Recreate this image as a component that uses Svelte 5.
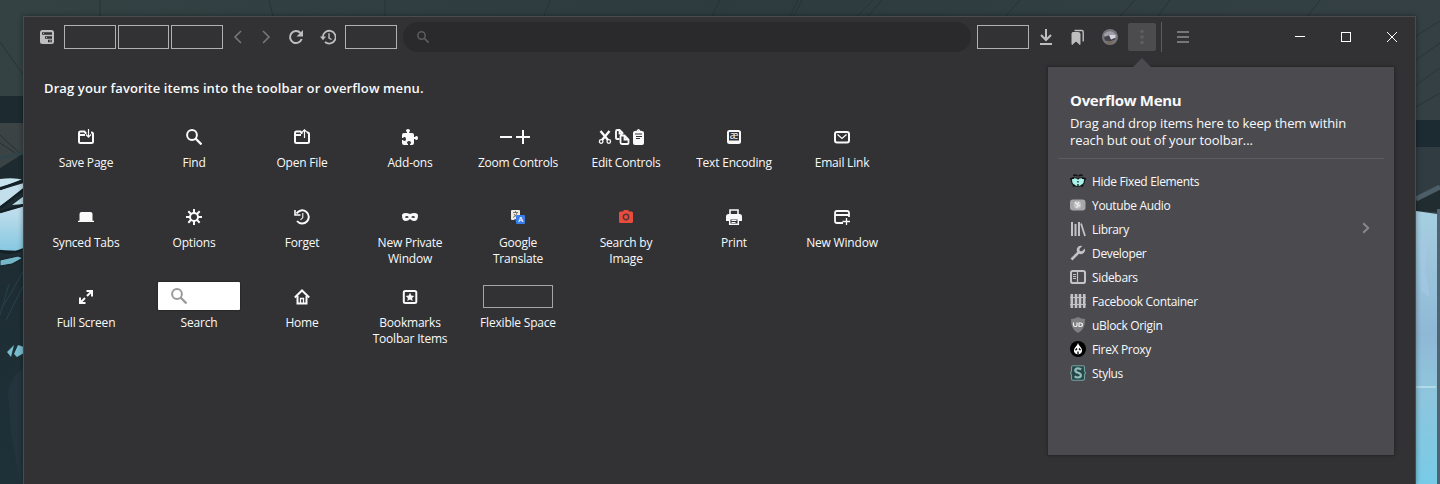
<script>
  const palette = [
    { icon: 'save', label: 'Save Page' },
    { icon: 'find', label: 'Find' },
    { icon: 'open', label: 'Open File' },
    { icon: 'addons', label: 'Add-ons' },
    { icon: 'zoom', label: 'Zoom Controls', w: 32 },
    { icon: 'edit', label: 'Edit Controls', w: 48 },
    { icon: 'encoding', label: 'Text Encoding' },
    { icon: 'mail', label: 'Email Link' },
    { icon: 'synced', label: 'Synced Tabs' },
    { icon: 'gear', label: 'Options' },
    { icon: 'forget', label: 'Forget' },
    { icon: 'mask', label: 'New Private Window' },
    { icon: 'translate', label: 'Google Translate' },
    { icon: 'camera', label: 'Search by Image' },
    { icon: 'print', label: 'Print' },
    { icon: 'newwin', label: 'New Window' },
    { icon: 'full', label: 'Full Screen' },
    { icon: 'search', label: 'Search' },
    { icon: 'home', label: 'Home' },
    { icon: 'bookmark', label: 'Bookmarks Toolbar Items' },
    { icon: 'space', label: 'Flexible Space' }
  ];
  const menu = [
    { icon: 'hide', label: 'Hide Fixed Elements' },
    { icon: 'youtube', label: 'Youtube Audio' },
    { icon: 'library', label: 'Library', more: true },
    { icon: 'wrench', label: 'Developer' },
    { icon: 'sidebar', label: 'Sidebars' },
    { icon: 'fence', label: 'Facebook Container' },
    { icon: 'ublock', label: 'uBlock Origin' },
    { icon: 'firex', label: 'FireX Proxy' },
    { icon: 'stylus', label: 'Stylus' }
  ];
</script>

{#snippet glyph(name, w = 16)}
  <svg class="glyph" width={w} height="16" viewBox="0 0 {w} 16" fill="none" stroke="currentColor" stroke-width="2">
    {#if name === 'tree'}
      <rect x="1" y="1" width="14" height="14" rx="2.5" fill="currentColor" stroke="none" />
      <path d="M3 4.500h10M6 8.500h7M9 12h4" stroke="#323234" stroke-width="2.600" />
      <path d="M4 4.500h1M7 8.500h1M10.500 12h2" stroke-width=".9" />
    {:else if name === 'back'}
      <path d="M11 2 5 8l6 6" stroke-width="1.6" />
    {:else if name === 'forward'}
      <path d="m5 2 6 6-6 6" stroke-width="1.6" />
    {:else if name === 'reload'}
      <path d="M13.7 10A6 6 0 1 1 12.5 4" />
      <path d="M15 1v6.5H8.5z" fill="currentColor" stroke="none" />
    {:else if name === 'history'}
      <path d="M2.800 8.500A6.400 6.400 0 1 1 5 13" stroke-width="1.800" />
      <path d="M0 7.500h6l-3 3.800z" fill="currentColor" stroke="none" />
      <path d="M9 4.200V9l2.600 1.500" stroke-width="1.400" />
    {:else if name === 'find'}
      <circle cx="6" cy="6" r="4.900" /><path d="m9.500 9.500 6 6" stroke-width="2.300" />
    {:else if name === 'download'}
      <path d="M8 0v11M3 6l5 5 5-5M2 15h12" />
    {:else if name === 'bookmarks'}
      <path d="M2 4.500Q2 3.500 3 3.500h5.500Q10 3.500 10 5v10.500l-4-3.500-4 3.500z" fill="currentColor" stroke="currentColor" stroke-width="1" />
      <path d="M4.500 1.500h7.500Q13.200 1.500 13.200 3v9.500" stroke-width="1.400" />
    {:else if name === 'dots'}
      <g fill="currentColor" stroke="none"><circle cx="8" cy="2.500" r="1.800" /><circle cx="8" cy="8" r="1.800" /><circle cx="8" cy="13.500" r="1.800" /></g>
    {:else if name === 'burger'}
      <path d="M2 3h12M2 8h12M2 13h12" />
    {:else if name === 'min'}
      <path d="M3 7.500h10" stroke-width="1" />
    {:else if name === 'max'}
      <rect x="3.500" y="3.500" width="9" height="9" stroke-width="1" />
    {:else if name === 'close'}
      <path d="m3 3 10 10M13 3 3 13" stroke-width="1" shape-rendering="crispEdges" />
    {:else if name === 'avatar'}
      <circle cx="8" cy="8" r="8" fill="#77757c" stroke="none" />
      <path d="M2 5q4-4 9-2l4 4-7 1-5 2z" fill="#a09ea8" stroke="none" />
      <path d="M2 8 8 6l6 1.500-1 3-5 2-5-1z" fill="#45424a" stroke="none" />
      <path d="m7 6 6 0 1 2.500-5 2z" fill="#d6d5df" stroke="none" />
      <path d="m5 13 6-1-1 3H6z" fill="#7c6a55" stroke="none" />
    {:else if name === 'save' || name === 'open'}
      <path d="M7 6H1.500M1 4v8.500Q1 14 2.500 14h11q1.500 0 1.500-1.500V5q0-1.500-1.500-1.500H13M8.500 4H7.500L6.500 2.500h-4Q1 2.500 1 4" />
      {#if name === 'save'}
        <path d="M10.500 0v8M8 5.500l2.500 2.700L13 5.500" stroke-width="1.200" />
      {:else}
        <path d="M10.500 9V1M8 3.200 10.500.8 13 3.200" stroke-width="1.200" />
      {/if}
    {:else if name === 'addons'}
      <path d="M0 6q0-2 2-2h3V3Q4 2.500 4 1.500 4 0 6 0t2 1.500Q8 2.500 7.200 3v1H10q2 0 2 2v2h1q.5-1 1.500-1Q16 7 16 9t-1.500 2q-1 0-1.500-1h-1v4q0 2-2 2H8v-1q1-.5 1-1.500Q9 12 7 12t-2 1.500Q5 14.500 6 15v1H2q-2 0-2-2v-3h1q.5 1 1.500 1Q4 12 4 10T2.500 8Q1.500 8 1 9H0z" fill="currentColor" stroke="none" />
    {:else if name === 'zoom'}
      <path d="M2 8h12M18 8h14M25 1v14" />
    {:else if name === 'edit'}
      <path d="m2.500 2 7.500 9M11.500 2 4 11" stroke-width="2.400" />
      <circle cx="3.200" cy="12.500" r="1.800" stroke-width="1.300" /><circle cx="10.800" cy="12.500" r="1.800" stroke-width="1.300" />
      <path d="M24.500 5V4l-3-3h-2Q18 1 18 2.500V9q0 1 1 1h2.500" stroke-width="1.900" />
      <path d="M23 6.500h3.500l4 4V14q0 1-1 1h-5.500q-1.500 0-1.500-1.500V7zM26.500 6.500v4h4M21.500 1v3.500h3" stroke-width="1.800" />
      <rect x="35" y="2" width="11" height="14" rx="2" fill="currentColor" stroke="none" /><path d="M37.500 2.500h1.700q1.300-3.500 2.600 0h1.700" stroke-width="1.500" />
      <path d="M37 5h7M38 7.500h6M38 9.500h4" stroke="#323234" stroke-width="1" />
    {:else if name === 'encoding'}
      <rect x="2" y="2" width="12" height="12" rx="1.500" />
      <path d="M3 12.500h10" stroke-width="2" />
      <text x="8" y="9.500" text-anchor="middle" font-size="10" fill="currentColor" stroke="none">æ</text>
    {:else if name === 'mail'}
      <rect x="1" y="3" width="14" height="10.500" rx="2" /><path d="m3.500 5.500 4.500 4 4.500-4" stroke-width="1.300" />
    {:else if name === 'synced'}
      <path d="M0 13v-1.300h1.500V5q0-2 2-2h9q2 0 2 2v6.700H16V13z" fill="currentColor" stroke="none" />
    {:else if name === 'gear'}
      <circle cx="8" cy="8" r="4" />
      <path d="M8 4V0M8 12v4M4 8H0M12 8h4M5.200 5.200 2.300 2.300M10.800 10.800l2.900 2.900M10.800 5.200l2.900-2.900M5.200 10.800l-2.900 2.900" />
    {:else if name === 'forget'}
      <path d="M2.500 4.500a6.600 6.600 0 1 1 .5 7.500" />
      <path d="M1 1v5h5.500" stroke-width="1.600" /><path d="M8.800 4v4.500L6.500 11" stroke-width="1.100" />
    {:else if name === 'mask'}
      <path d="M0 6.500Q0 4 3.500 4 6 4 8 5q2-1 4.500-1Q16 4 16 6.500q0 5.500-4 5.500-2 0-4-2-2 2-4 2-4 0-4-5.500z" fill="currentColor" stroke="none" />
      <path d="M2.800 8.200q2-2.500 4 0-2 1.600-4 0zM9.200 8.200q2-2.500 4 0-2 1.600-4 0z" fill="#323234" stroke="none" />
    {:else if name === 'translate'}
      <rect x="1" y="1" width="9" height="10" rx="1" fill="#eeeae2" stroke="none" />
      <path d="M3 3.500h5M5.500 2v2M7 4q-1 3-4 4.500M4 5q1.500 3 4 3.500" stroke="#77746c" stroke-width="1" />
      <path d="M4 10h4l2 3-3 1z" fill="#2458b7" stroke="none" />
      <rect x="6" y="6" width="9" height="9" rx="1" fill="#397ee8" stroke="none" />
      <text x="10.800" y="13" text-anchor="middle" font-size="7.500" font-weight="600" fill="#fff" stroke="none">A</text>
    {:else if name === 'camera'}
      <path d="M1 4q0-1.500 1.500-1.500H5L6 1h4l1 1.500h2.500Q15 2.500 15 4v8.500q0 1.500-1.500 1.500h-11Q1 14 1 12.500z" fill="#e74c3c" stroke="none" />
      <circle cx="8" cy="8" r="2.700" stroke="#523435" stroke-width="1.500" />
    {:else if name === 'print'}
      <path d="M4 5.500V1h8v4.500" stroke-width="1.600" />
      <path d="M0 7.500Q0 5 2.500 5h11Q16 5 16 7.500V12H0z" fill="currentColor" stroke="none" />
      <path d="M3.700 9.700h8.600v5.500H3.700z" fill="#323234" stroke-width="1.500" /><path d="M5.500 11.500h5M5.500 13.500h4" stroke-width="1" />
    {:else if name === 'newwin'}
      <path d="M9 14H3q-2 0-2-2V4q0-2 2-2h10q2 0 2 2v4M1 6h14" stroke-width="1.800" /><path d="M8.500 12.500H16M12.500 9v7" stroke-width="1.300" />
    {:else if name === 'full'}
      <path d="M9 7l4-4M7 9l-4 4M8.500 2H14v5.500M2 8.500V14h5.500" />
    {:else if name === 'home'}
      <path d="m.8 8.500 7.200-7 7.200 7" /><path d="M3.500 7v7.500h9V7" /><path d="M6.500 14V9.500h3V14" stroke-width="1.300" />
    {:else if name === 'bookmark'}
      <rect x="1.800" y="2" width="12.500" height="12" rx="1.500" />
      <path d="m8 3.800 1.300 2.800 3 .4-2.200 2 .6 3L8 10.500 5.300 12l.6-3-2.200-2 3-.4z" fill="currentColor" stroke="none" />
    {:else if name === 'hide'}
      <path d="M1 5.500Q4.500 4 8 5.500q3.500-1.500 7 0L14 10q-1.500 3.500-6 3.500T2 10z" fill="#a9f3ea" stroke="#151b1b" stroke-width="1.200" />
      <path d="M8 5v1.500M8 8v1.500M8 11v2M3.500 3q1-2 4 0M8.500 3q3-2 4 0" stroke="#111" stroke-width="1.300" /><path d="M0 6l4-1M16 6l-4-1M3 13.500l2-1.500M13 13.500l-2-1.500" stroke="#111" stroke-width="1.500" />
    {:else if name === 'youtube'}
      <rect x="0" y="2.500" width="15.500" height="11" rx="3" fill="#a7a7a9" stroke="none" />
      <circle cx="7.500" cy="8" r="3.800" fill="#c3c3c5" stroke="none" /><path d="m5 5 2.500 3L9 5M6 10.500l4-2.500" stroke="#eee" stroke-width="1.200" />
    {:else if name === 'library'}
      <path d="M2 1v14M5.500 3v12M9 1v14" /><path d="m11 2.500 4 12.500" stroke-width="1.800" />
    {:else if name === 'wrench'}
      <path d="M1.500 14.500 9 7" stroke-width="2.600" />
      <path d="M14.800 3.600 12 6.200 9.700 5.900 9.500 3.800 12.300 1Q8.800 0 7 3.200q-.8 2 .2 3.900l1.500 1.500q2 1 4 .2Q15.800 7 14.800 3.600z" fill="currentColor" stroke="none" />
    {:else if name === 'sidebar'}
      <rect x="1" y="2" width="14" height="12" rx="1.800" /><path d="M7.500 2v12" stroke-width="1.200" /><path d="M3 5.500h3M3 7.500h3M3 9.500h3" stroke-width="1" />
    {:else if name === 'fence'}
      <path d="M1.800 1v14M6 1v14M10 1v14M14.200 1v14" stroke-width="2.600" /><path d="M0 4.500h16M0 11.500h16" stroke-width="1" />
    {:else if name === 'ublock'}
      <path d="M8 0q3.500 2 7 2 .5 10-7 14Q.5 12 1 2q3.500 0 7-2z" fill="#7e7e80" stroke="none" />
      <path d="M3.500 5.500V8q0 1.500 1.800 1.500T7 8V5.500M9 6h1.500q2 0 2 1.700t-2 1.800H9z" stroke="#f2f2f2" stroke-width="1.200" />
    {:else if name === 'firex'}
      <circle cx="8" cy="8" r="8" fill="#000" stroke="none" />
      <path d="M8 2q.5 2 2.500 4 2.500 3 1 5.500-.8 1.500-3.500 2-2.700-.5-3.500-2-1.500-2.500 1-5.500Q7.500 4 8 2z" fill="#fff" stroke="none" />
      <path d="M7 7.500 5.500 9.200M9 7.500l1.500 1.700M8 10.500v3" stroke="#000" stroke-width="1.300" />
    {:else if name === 'stylus'}
      <path d="M3 .7h10q1.500 0 1.500 1.500v4L15.500 8l-1 1.800v4q0 1.500-1.500 1.500H3q-1.500 0-1.500-1.500v-4L.5 8l1-1.800v-4Q1.500.7 3 .7z" fill="#26474a" stroke="#6fa3a3" stroke-width="1.100" />
      <path d="M11.200 4.500Q10 3.300 8 3.300q-2.700 0-2.700 2Q5.300 7 8 7.700q2.900.8 2.900 2.600 0 2.200-3 2.200-2 0-3.200-1.200" stroke="#92bcb8" stroke-width="2.200" />
    {/if}
  </svg>
{/snippet}

<div class="desktop">
  <svg class="wallpaper" width="1440" height="484" viewBox="0 0 1440 484">
    <defs>
      <linearGradient id="wall" x1="0" x2="1"><stop offset="0" stop-color="#344244" /><stop offset=".5" stop-color="#2d3b3f" /><stop offset="1" stop-color="#344044" /></linearGradient>
      <linearGradient id="glass" x1="0" x2="0" y1="0" y2="1"><stop offset="0" stop-color="#a6cfe1" /><stop offset=".45" stop-color="#8fb8d6" /><stop offset=".65" stop-color="#8fc5dc" /><stop offset="1" stop-color="#78cbe7" /></linearGradient>
      <linearGradient id="sky" x1="0" x2="0" y1="0" y2="1"><stop offset="0" stop-color="#c5e0ee" /><stop offset="1" stop-color="#86c8e0" /></linearGradient>
      <linearGradient id="deep" x1="0" x2="0" y1="0" y2="1"><stop offset="0" stop-color="#1d2b30" /><stop offset="1" stop-color="#1e3138" /></linearGradient>
    </defs>
    <path d="M0 0h1440v484H0z" fill="url(#wall)" />
    <g stroke="#233036" stroke-width="1" opacity=".7">
      <path d="M100 0v16M269 0l4 16M385 0v16M550 0l-6 16M720 0l-8 16M798 0l-8 16M802 0l-8 16M873 0l-16 16M882 0l-14 16M1020 0l-14 16M1135 0l-15 16M1170 0l-12 16M1320 0l-12 16" />
      <path d="m0 42 24 34M1416 36l24-15M1416 60l24-17M1416 85l24-17M1416 107l24-14" />
    </g>
    <path d="M0 96h24v27H0z" fill="#1d2b31" />
    <path d="M0 123h24v45H0z" fill="#3b4344" />
    <path d="m0 135 24 22M0 143l24 16" stroke="#263236" />
    <path d="M0 168 24 153V484H0z" fill="url(#deep)" />
    <path d="m0 158 24-5" stroke="#31444b" stroke-width="3" />
    <path d="M0 179q14-2 24 1L0 187z" fill="#c6e3ee" />
    <path d="m0 190 24-7v6L0 206z" fill="#c3dfec" />
    <path d="m12 205 12-9v8z" fill="#b8dbe8" />
    <path d="m0 213 24-7v45L0 250z" fill="url(#sky)" />
    <path d="M0 189 24 180M0 208l24-19M0 212l24-7M0 251q12 4 24-2" stroke="#132126" stroke-width="2.500" fill="none" />
    <path d="m0 260 18-4 5 2-11 6-12 2z" fill="#75b6c7" stroke="#132126" />
    <path d="M9 284 0 315M24 270 4 305M24 284 6 320" stroke="#2e505c" opacity=".6" />
    <path d="m7 352 7-7-3 12zM14 354l4-9 6 2v6l-7 4z" fill="#79bdcf" />
    <path d="M24 368q-13 7-16 25l3 40 9 51h4z" fill="#23343d" />
    <path d="M1416 120h24v27h-24z" fill="#1c2a32" />
    <path d="M1416 147h24v65h-24z" fill="#303c42" />
    <path d="m1416 200 24-12v24l-24-1z" fill="#202c30" />
    <path d="m1416 199 24-12" stroke="#4c5e68" stroke-width="5" />
    <path d="m1416 211 21 3v270h-21z" fill="url(#glass)" />
    <path d="m1419 235 8 3-2 30 5 30-9-7z" fill="#a5c9e3" opacity=".6" />
    <path d="M1416 387h20" stroke="#b0dbe9" stroke-width="2" />
    <path d="M1437 209h3v275h-3z" fill="#506372" />
  </svg>

  <main class="window">
    <header class="toolbar">
      <span class="tool tree">{@render glyph('tree')}</span>
      <span class="spacer"></span>
      <span class="spacer narrow"></span>
      <span class="spacer near"></span>
      <span class="tool back">{@render glyph('back')}</span>
      <span class="tool fwd">{@render glyph('forward')}</span>
      <span class="tool reload">{@render glyph('reload')}</span>
      <span class="tool">{@render glyph('history')}</span>
      <span class="spacer"></span>
      <div class="urlbar">{@render glyph('find')}</div>
      <span class="spacer after"></span>
      <span class="tool dl">{@render glyph('download')}</span>
      <span class="tool">{@render glyph('bookmarks')}</span>
      <span class="tool">{@render glyph('avatar')}</span>
      <span class="overflow">{@render glyph('dots')}</span>
      <span class="rule"></span>
      <span class="tool burger">{@render glyph('burger')}</span>
      <div class="controls">
        {@render glyph('min')}{@render glyph('max')}{@render glyph('close')}
      </div>
    </header>

    <div class="content">
      <section class="customize">
        <h1>Drag your favorite items into the toolbar or overflow menu.</h1>
        <div class="palette">
          {#each palette as item}
            <div class="item" class:searchitem={item.icon === 'search'}>
              <div class="art" class:multi={item.w}>
                {#if item.icon === 'search'}
                  <span class="searchbox">{@render glyph('find')}</span>
                {:else if item.icon === 'space'}
                  <span class="flexspace"></span>
                {:else}
                  {@render glyph(item.icon, item.w)}
                {/if}
              </div>
              <span class="label">{item.label}</span>
            </div>
          {/each}
        </div>
      </section>

      <aside class="panel">
        <svg class="arrow" width="20" height="10" viewBox="0 0 20 10"><path d="M0 10 10 0l10 10z" fill="#4a4a4f" /></svg>
        <h2>Overflow Menu</h2>
        <p>Drag and drop items here to keep them within<br />reach but out of your toolbar...</p>
        <hr />
        <ul>
          {#each menu as entry}
            <li>
              {@render glyph(entry.icon)}
              <span>{entry.label}</span>
              {#if entry.more}
                <svg class="more" width="8" height="12" viewBox="0 0 8 12"><path d="m1.200 1.200 5 4.800-5 4.800" fill="none" stroke="#88888c" stroke-width="2" /></svg>
              {/if}
            </li>
          {/each}
        </ul>
      </aside>
    </div>
  </main>
</div>

<style>
  :global(body) { margin: 0; overflow: hidden; background: #202e33; }
  .desktop {
    position: relative; box-sizing: border-box; width: 1440px; height: 484px;
    padding: 16px 24px 0 23px; overflow: hidden;
    font-family: "Open Sans", "Noto Sans", sans-serif; font-size: 12px; color: #f9f9fa;
  }
  .wallpaper { position: absolute; left: 0; top: 0; }
  .glyph { display: block; flex: none; }
  .window {
    position: relative; box-sizing: border-box; height: 468px;
    border: 1px solid #4a4b4c; border-bottom: 0; background: #323234;
    box-shadow: 0 0 5px #0006;
  }
  .toolbar { display: flex; align-items: center; height: 40px; color: #bebebf; }
  .tool { margin-left: 16px; }
  .tree { margin-left: 15px; }
  .back { margin-left: 7px; color: #777779; }
  .fwd { margin-left: 12px; color: #777779; }
  .reload { margin-left: 14px; }
  .spacer { box-sizing: border-box; width: 52px; height: 24px; margin-left: 9px; border: 1px solid #b1b1b3; }
  .narrow { width: 51px; margin-left: 2px; }
  .near { margin-left: 2px; }
  .after { margin-left: 6px; }
  .urlbar {
    display: flex; align-items: center; box-sizing: border-box; width: 568px; height: 30px;
    margin-left: 6px; padding-left: 14px; border-radius: 15px; background: #2a2a2c; color: #5c5c5e;
  }
  .urlbar .glyph { width: 12px; height: 12px; }
  .dl { margin-left: 9px; }
  .overflow {
    display: grid; place-items: center; width: 28px; height: 28px; margin-left: 10px;
    border-radius: 2px; background: #4c4c4e; color: #5f5f62;
  }
  .rule { width: 1px; height: 30px; margin-left: 5px; background: #5c5c5e; }
  .burger { margin-left: 13px; color: #777779; }
  .controls { display: flex; gap: 30px; margin-left: 101px; color: #fff; }
  .content { display: flex; justify-content: space-between; padding: 10px 21px 0 8px; }
  .customize { width: 864px; }
  h1 { margin: 12px 0 0 12px; font-size: 13px; letter-spacing: .11px; line-height: 18px; font-weight: 600; white-space: nowrap; }
  .palette { display: grid; grid-template-columns: repeat(8, 108px); grid-auto-rows: 80px; padding-top: 25px; }
  .item { display: flex; flex-direction: column; align-items: center; }
  .art { display: grid; place-items: center; height: 30px; }
  .multi { padding-right: 8px; }
  .label { width: 88px; margin-top: 3px; text-align: center; line-height: 16px; letter-spacing: -.2px; }
  .searchitem { padding-left: 10px; }
  .searchbox {
    display: flex; align-items: center; box-sizing: border-box; width: 82px; height: 28px;
    padding-left: 13px; border-radius: 1px; background: #fff; color: #9b9b9c;
    box-shadow: 0 0 2px #0008; margin-top: -2px;
  }
  .flexspace { box-sizing: border-box; width: 70px; height: 23px; margin-top: -2px; border: 1px solid #a5a5a7; }
  .panel {
    position: relative; box-sizing: border-box; width: 346px; height: 388px; padding: 22px 10px 0;
    background: #4a4a4f; box-shadow: 0 0 0 1px #29292b, 0 0 4px #0006;
  }
  .arrow { position: absolute; left: 84px; top: -9px; }
  h2 { margin: 0 0 0 12px; font-size: 15px; line-height: 22px; font-weight: 700; letter-spacing: -.3px; }
  .panel p { margin: 4px 0 0 12px; font-size: 13px; letter-spacing: -.1px; line-height: 17px; white-space: nowrap; }
  hr { height: 1px; margin: 9px 0 10px; border: 0; background: #5d5d61; }
  ul { margin: 0; padding: 0 14px 0 12px; list-style: none; }
  li { display: flex; align-items: center; height: 24px; color: #c3c3c5; letter-spacing: -.33px; }
  li span { margin-left: 6px; color: #f9f9fa; white-space: nowrap; }
  .more { margin-left: auto; margin-top: -3px; }
</style>
